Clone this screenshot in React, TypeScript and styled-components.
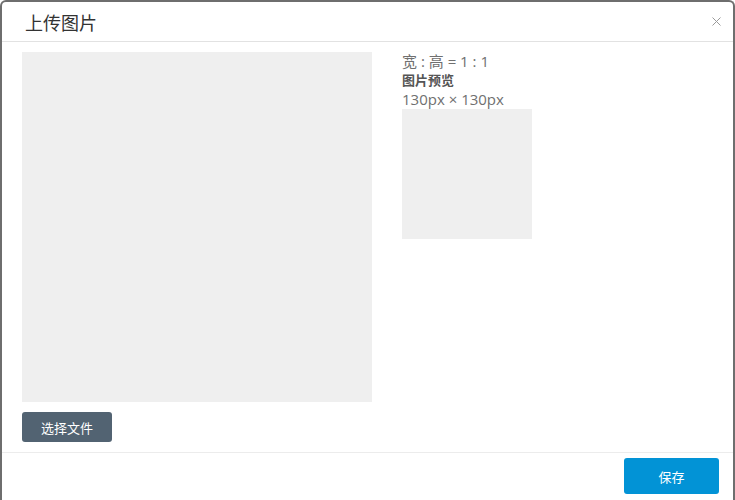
import React from "react";
import styled, { createGlobalStyle } from "styled-components";

const Global = createGlobalStyle`
  html, body { margin: 0; padding: 0; background: #ffffff; }
  * { box-sizing: border-box; }
  body { font-family: "Open Sans", "Noto Sans CJK SC", sans-serif; }
`;

const Dialog = styled.div`
  width: 735px;
  height: 500px;
  border: 2px solid #6e6e6e;
  border-bottom: none;
  border-radius: 6px 6px 0 0;
  background: #fff;
  display: flex;
  flex-direction: column;
`;

const Header = styled.div`
  height: 40px;
  border-bottom: 1px solid #e2e2e2;
  display: flex;
  align-items: center;
  justify-content: space-between;
  padding: 0 10px 0 23px;
`;

const Title = styled.h3`
  margin: 0;
  font-size: 18px;
  font-weight: normal;
  color: #333;
  font-family: "Noto Sans CJK SC", sans-serif;
  line-height: 20px;
`;

const Close = styled.button`
  border: none;
  background: none;
  padding: 0;
  width: 14px;
  height: 14px;
  display: flex;
  align-items: center;
  justify-content: center;
  cursor: pointer;
`;

const Body = styled.div`
  padding: 10px 20px 10px 20px;
  border-bottom: 1px solid #ececec;
`;

const Row = styled.div`
  display: flex;
  gap: 30px;
`;

const Crop = styled.div`
  width: 350px;
  height: 350px;
  background: #efefef;
`;

const Side = styled.div`
  display: flex;
  flex-direction: column;
  font-family: "Open Sans", "Noto Sans CJK SC", sans-serif;
  line-height: 19px;
  color: #666;
`;

const Label = styled.div<{ $bold?: boolean }>`
  font-weight: ${(p) => (p.$bold ? 700 : 400)};
  font-size: ${(p) => (p.$bold ? "13px" : "15px")};
  color: ${(p) => (p.$bold ? "#555" : "#707070")};
  white-space: pre;
`;

const Preview = styled.div`
  width: 130px;
  height: 130px;
  background: #efefef;
`;

const Btn = styled.button<{ $primary?: boolean }>`
  border: none;
  border-radius: 3px;
  color: #fff;
  font-family: "Noto Sans CJK SC", sans-serif;
  font-size: 13px;
  cursor: pointer;
  background: ${(p) => (p.$primary ? "#0293d6" : "#526372")};
  width: ${(p) => (p.$primary ? "95px" : "90px")};
  height: ${(p) => (p.$primary ? "36px" : "30px")};
  padding: 0;
`;

const FileRow = styled.div`
  margin-top: 10px;
  display: flex;
`;

const Footer = styled.div`
  display: flex;
  justify-content: flex-end;
  padding: 5px 14px 0 0;
`;

export default function App() {
  return (
    <>
      <Global />
      <Dialog>
        <Header>
          <Title>上传图片</Title>
          <Close aria-label="close">
            <svg width="9" height="9" viewBox="0 0 9 9">
              <path d="M0.5 0.5 L8.5 8.5 M8.5 0.5 L0.5 8.5" stroke="#9a9a9a" strokeWidth="1" fill="none" />
            </svg>
          </Close>
        </Header>
        <Body>
          <Row>
            <Crop />
            <Side>
              <Label>宽 : 高 = 1 : 1</Label>
              <Label $bold>图片预览</Label>
              <Label>130px × 130px</Label>
              <Preview />
            </Side>
          </Row>
          <FileRow>
            <Btn>选择文件</Btn>
          </FileRow>
        </Body>
        <Footer>
          <Btn $primary>保存</Btn>
        </Footer>
      </Dialog>
    </>
  );
}
